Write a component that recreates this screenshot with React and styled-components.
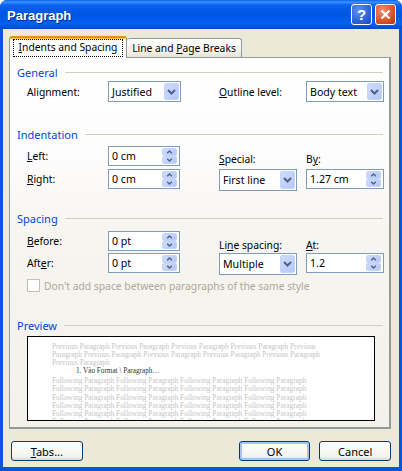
import React from "react";
import styled, { createGlobalStyle } from "styled-components";

const GlobalStyle = createGlobalStyle`
  html, body {
    margin: 0;
    padding: 0;
    background: #fff;
  }
  u {
    text-underline-offset: 1px;
  }
`;

const Window = styled.div`
  width: 402px;
  height: 471px;
  box-sizing: border-box;
  padding: 0 3px 4px;
  display: flex;
  flex-direction: column;
  background: #0855dd;
  border-radius: 7px 7px 0 0;
  font-family: "Noto Sans", "Liberation Sans", sans-serif;
  font-size: 10.3px;
  color: #000;
  overflow: hidden;
`;

const TitleBar = styled.div`
  height: 29px;
  margin: 0 -3px;
  padding: 2px 6px 0 7px;
  box-sizing: border-box;
  flex: none;
  display: flex;
  align-items: center;
  gap: 3px;
  background: linear-gradient(#0a5fe8 0, #3a93ff 2px, #0a62ec 5px, #0055e5 14px, #0260f0 24px, #0048c8 29px);
`;

const Title = styled.div`
  flex: 1;
  font-family: "Liberation Sans", sans-serif;
  font-size: 13px;
  font-weight: 700;
  color: #fff;
  text-shadow: 1px 1px 0 #0a2a9a;
`;

const CaptionButton = styled.div`
  width: 19px;
  height: 19px;
  margin-top: -2px;
  border: 1px solid #fff;
  border-radius: 3px;
  display: flex;
  align-items: center;
  justify-content: center;
  font-family: "Liberation Sans", sans-serif;
  font-size: 15px;
  font-weight: 700;
  color: #fff;
  background: ${(p) =>
    p.$close
      ? "radial-gradient(circle at 35% 30%, #ef8f70, #d9512a 60%, #b8300f)"
      : "radial-gradient(circle at 35% 30%, #5f92f0, #2c62d8 60%, #1c47b8)"};
`;

const Client = styled.div`
  flex: 1;
  display: flex;
  flex-direction: column;
  padding: 7px 8px 0 6px;
  background: #ece9d8;
`;

const TabStrip = styled.div`
  display: flex;
  align-items: flex-end;
  height: 22px;
  position: relative;
  z-index: 1;
  margin-bottom: -1px;
`;

const Tab = styled.div`
  box-sizing: border-box;
  display: flex;
  align-items: center;
  justify-content: center;
  border: 1px solid #919b9c;
  border-radius: 3px 3px 0 0;
  ${(p) =>
    p.$active
      ? `
    width: 118px;
    height: 22px;
    border-top: 2px solid #e68b2c;
    border-bottom: none;
    background: #fff;
    box-shadow: inset 0 1px 0 #ffc73c;
  `
      : `
    width: 115px;
    height: 19px;
    margin-bottom: 1px;
    border-left: none;
    border-bottom: none;
    background: linear-gradient(#fff, #f3f2e9 70%, #e6e3d4);
  `}
`;

const FocusLabel = styled.span`
  width: 108px;
  box-sizing: border-box;
  text-align: center;
  padding: 1px 0 2px;
  outline: 1px dotted #000;
  line-height: 13px;
`;

const Panel = styled.div`
  box-sizing: border-box;
  width: 382px;
  height: 372px;
  padding: 8px 6px 0 7px;
  flex: none;
  border: 1px solid #919b9c;
  border-right-width: 2px;
  border-bottom-width: 2px;
  background: linear-gradient(#fff 0, #fdfcfc 100px, #f7f5f0 170px, #f3f1ea 100%);
`;

const Section = styled.section`
  margin-top: ${(p) => p.$top || 0}px;
`;

const Heading = styled.div`
  display: flex;
  align-items: center;
  height: 14px;
  line-height: 14px;
  font-size: 11px;
  color: #0046d5;
  &::after {
    content: "";
    flex: 1;
    height: 1px;
    margin: -2px 0 0 7px;
    background: #d0d0bf;
  }
`;

const Body = styled.div`
  display: flex;
  padding-left: 10px;
  margin-top: ${(p) => p.$top || 0}px;
`;

const LeftColumn = styled.div`
  width: 192px;
  flex: none;
  display: flex;
  flex-direction: column;
  gap: ${(p) => p.$gap ?? 3}px;
`;

const RightColumn = styled.div`
  display: flex;
  align-items: flex-start;
  gap: 9px;
  margin-top: ${(p) => p.$top}px;
`;

const Field = styled.div`
  display: flex;
  align-items: center;
`;

const FieldLabel = styled.div`
  width: ${(p) => p.$width}px;
  flex: none;
  line-height: 14px;
`;

const Stacked = styled.div`
  width: 78px;
  display: flex;
  flex-direction: column;
  gap: ${(p) => p.$gap}px;
`;

const Box = styled.div`
  box-sizing: border-box;
  display: flex;
  align-items: center;
  justify-content: space-between;
  width: ${(p) => p.$width}px;
  height: ${(p) => p.$height}px;
  padding: 1px 1px 1px 3px;
  border: 1px solid #7f9db9;
  background: #fff;
  line-height: 14px;
  font-size: 10.6px;
`;

const ArrowFace = styled.div`
  width: 15px;
  display: flex;
  align-items: center;
  justify-content: center;
  border: 1px solid #c4d3fa;
  border-radius: 2px;
  background: linear-gradient(135deg, #d0dcfc, #b4c7f7);
  color: #4d6185;
`;

const DropFace = styled(ArrowFace)`
  height: 100%;
  box-sizing: border-box;
`;

const SpinStack = styled.div`
  height: 100%;
  display: flex;
  flex-direction: column;
  margin-right: 1px;
`;

const SpinFace = styled(ArrowFace)`
  box-sizing: border-box;
  flex: 1;
`;

const CheckRow = styled.div`
  display: flex;
  align-items: center;
  gap: 4px;
  margin: 4px 0 0 10px;
  height: 13px;
  color: #aca899;
`;

const CheckBox = styled.div`
  box-sizing: border-box;
  width: 13px;
  height: 13px;
  border: 1px solid #c2c0b4;
  background: #fff;
`;

const PreviewBox = styled.div`
  box-sizing: border-box;
  width: 348px;
  height: 85px;
  margin: 3px 0 0 10px;
  padding: 6px 0 0 24px;
  border: 1px solid #000;
  background: #fff;
  overflow: hidden;
  font-family: "Liberation Serif", serif;
  font-size: 7.4px;
  line-height: 8.1px;
  white-space: nowrap;
  color: #c4c4c4;
`;

const PreviewLine = styled.div`
  ${(p) => p.$current && "padding-left: 24px; color: #333; font-size: 7.2px;"}
  ${(p) => p.$gap && "margin-top: 2px;"}
`;

const Footer = styled.div`
  display: flex;
  gap: 9px;
  margin-top: 12px;
  padding-left: 2px;
`;

const DialogButton = styled.button`
  box-sizing: border-box;
  width: ${(p) => p.$width || 72}px;
  height: 20px;
  margin-right: ${(p) => p.$push || 0}px;
  padding: 0;
  border: 1px solid #003c74;
  border-radius: 3px;
  background: linear-gradient(#fff, #f4f3ee 80%, #dcd8c8);
  font-family: inherit;
  font-size: 11px;
  color: #000;
  ${(p) => p.$primary && "box-shadow: inset 0 0 0 2px #a9c3ef;"}
`;

const Chevron = ({ up, small }) => (
  <svg width={small ? 7 : 9} height={small ? 4 : 6} viewBox="0 0 9 6" fill="none">
    <path d={up ? "M1 5 L4.5 1.5 L8 5" : "M1 1 L4.5 4.5 L8 1"} stroke="currentColor" strokeWidth={2} />
  </svg>
);

const Select = ({ width, height = 21, value }) => (
  <Box $width={width} $height={height}>
    {value}
    <DropFace>
      <Chevron />
    </DropFace>
  </Box>
);

const Spin = ({ width = 72, value }) => (
  <Box $width={width} $height={20}>
    {value}
    <SpinStack>
      <SpinFace>
        <Chevron up small />
      </SpinFace>
      <SpinFace>
        <Chevron small />
      </SpinFace>
    </SpinStack>
  </Box>
);

const previous = [
  "Previous Paragraph Previous Paragraph Previous Paragraph Previous Paragraph Previous",
  "Paragraph Previous Paragraph Previous Paragraph Previous Paragraph Previous Paragraph",
  "Previous Paragraph",
];

const following = Array.from({ length: 6 }, () =>
  "Following Paragraph Following Paragraph Following Paragraph Following Paragraph"
);

function App() {
  return (
    <>
      <GlobalStyle />
      <Window>
        <TitleBar>
          <Title>Paragraph</Title>
          <CaptionButton>?</CaptionButton>
          <CaptionButton $close>
            <svg width="11" height="11" viewBox="0 0 11 11">
              <path d="M1.5 1.5 L9.5 9.5 M9.5 1.5 L1.5 9.5" stroke="#fff" strokeWidth="2.2" />
            </svg>
          </CaptionButton>
        </TitleBar>
        <Client>
          <TabStrip>
            <Tab $active>
              <FocusLabel>
                <u>I</u>ndents and Spacing
              </FocusLabel>
            </Tab>
            <Tab>
              <span>
                Line and <u>P</u>age Breaks
              </span>
            </Tab>
          </TabStrip>
          <Panel>
            <Section>
              <Heading>General</Heading>
              <Body $top={1}>
                <LeftColumn>
                  <Field>
                    <FieldLabel $width={81}>Alignment:</FieldLabel>
                    <Select width={73} value="Justified" />
                  </Field>
                </LeftColumn>
                <Field>
                  <FieldLabel $width={87}>
                    <u>O</u>utline level:
                  </FieldLabel>
                  <Select width={78} value="Body text" />
                </Field>
              </Body>
            </Section>

            <Section $top={26}>
              <Heading>Indentation</Heading>
              <Body $top={4}>
                <LeftColumn>
                  <Field>
                    <FieldLabel $width={81}>
                      <u>L</u>eft:
                    </FieldLabel>
                    <Spin value="0 cm" />
                  </Field>
                  <Field>
                    <FieldLabel $width={81}>
                      <u>R</u>ight:
                    </FieldLabel>
                    <Spin value="0 cm" />
                  </Field>
                </LeftColumn>
                <RightColumn $top={6}>
                  <Stacked $gap={3}>
                    <FieldLabel $width={78}>
                      <u>S</u>pecial:
                    </FieldLabel>
                    <Select width={78} height={22} value="First line" />
                  </Stacked>
                  <Stacked $gap={3}>
                    <FieldLabel $width={78}>
                      B<u>y</u>:
                    </FieldLabel>
                    <Spin width={78} value="1.27 cm" />
                  </Stacked>
                </RightColumn>
              </Body>
            </Section>

            <Section $top={21}>
              <Heading>Spacing</Heading>
              <Body $top={5}>
                <LeftColumn $gap={2}>
                  <Field>
                    <FieldLabel $width={81}>
                      <u>B</u>efore:
                    </FieldLabel>
                    <Spin value="0 pt" />
                  </Field>
                  <Field>
                    <FieldLabel $width={81}>
                      Aft<u>e</u>r:
                    </FieldLabel>
                    <Spin value="0 pt" />
                  </Field>
                </LeftColumn>
                <RightColumn $top={7}>
                  <Stacked $gap={1}>
                    <FieldLabel $width={78}>
                      Li<u>n</u>e spacing:
                    </FieldLabel>
                    <Select width={78} height={22} value="Multiple" />
                  </Stacked>
                  <Stacked $gap={1}>
                    <FieldLabel $width={78}>
                      <u>A</u>t:
                    </FieldLabel>
                    <Spin width={78} value="1.2" />
                  </Stacked>
                </RightColumn>
              </Body>
              <CheckRow>
                <CheckBox />
                Don't add space between paragraphs of the same style
              </CheckRow>
            </Section>

            <Section $top={27}>
              <Heading>Preview</Heading>
              <PreviewBox>
                {previous.map((line, i) => (
                  <PreviewLine key={i}>{line}</PreviewLine>
                ))}
                <PreviewLine $current>1. Vào Format \ Paragraph…</PreviewLine>
                {following.map((line, i) => (
                  <PreviewLine key={i} $gap={i === 0}>
                    {line}
                  </PreviewLine>
                ))}
              </PreviewBox>
            </Section>
          </Panel>
          <Footer>
            <DialogButton $push={147}>
              <u>T</u>abs...
            </DialogButton>
            <DialogButton $primary>OK</DialogButton>
            <DialogButton>Cancel</DialogButton>
          </Footer>
        </Client>
      </Window>
    </>
  );
}

export default App;
